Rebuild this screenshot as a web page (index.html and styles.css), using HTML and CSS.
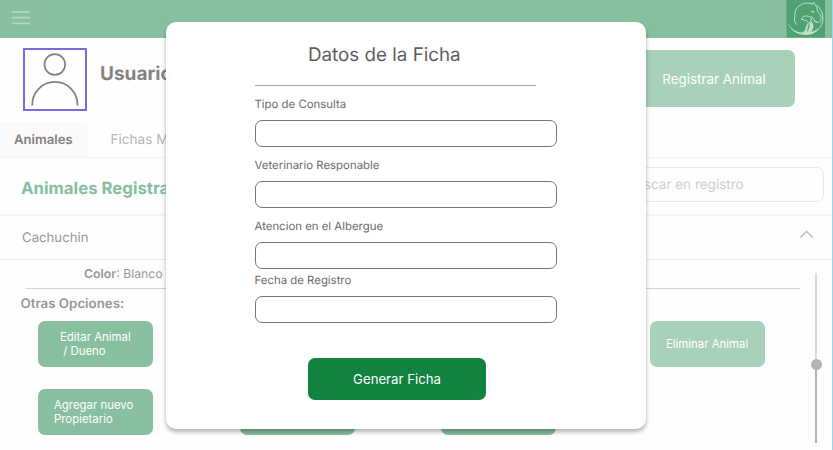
FILE: index.html
```html
<!DOCTYPE html>
<html lang="es">
<head>
<meta charset="utf-8">
<title>Registro de animales</title>
<link rel="stylesheet" href="styles.css">
</head>
<body>
<div class="screen">
  <header class="topbar">
    <svg class="menu" width="20" height="15" viewBox="0 0 20 15"><path d="M1 1.800h18M1 7.600h18M1 13.400h18" stroke="#b3d8c2" stroke-width="1.700"/></svg>
    <svg class="logo" width="39" height="38" viewBox="0 0 39 38">
      <path fill="#50a273" d="M.5 0H39v37.500H.5z"/>
      <g fill="none" stroke="#bfe0cc" stroke-width="1" stroke-linecap="round" stroke-linejoin="round">
        <path d="M26.500 4C19 1 10.500 5 9 12.500c-.5 2 0 4-.5 6s.5 4 2 6"/>
        <path d="M26.500 4l1-1.800 1.800 2.600c2 2 1 4.500 3.200 7.700 2 2.500 3.500 5 2 8-1 2.500-3.500 2.500-6 1"/>
        <path d="M31 5c6 6 8 14 3.500 22"/>
        <path d="M16 19.500c-1-3 2-3.500 5-3.500 2 0 2.500 1.500 5 1l2 3 3 2"/>
        <path d="M16 19.500l4.500 1 2 2-2 4-1 4M25 18c1 3-2 4-2 7"/>
        <path d="M26 11.500l1.500.3" stroke-width="1.600"/>
      </g>
      <path fill="#bfe0cc" d="M1.500 22.500C5 29 9.500 32 16 32.500l3-2 3-6 1.500 2 1.500-6c2 3 3 5 2 8l-1.500 3.500c3.500-1 6.500-3 8.500-5.500-2 5.500-7.500 8.500-13.500 8.500-9 0-16.500-4.500-19-12.500z"/>
      <path d="M23 25.500l-1.500 6" stroke="#50a273" stroke-width="1.200"/>
    </svg>
  </header>

  <section class="profile">
    <div class="avatar">
      <svg width="60" height="60" viewBox="0 0 60 60" fill="none" stroke="#808080" stroke-width="1.700"><circle cx="29.800" cy="14.500" r="10.300"/><path d="M7.300 55.500V54.500a22.600 22.600 0 0 1 45.200 0v1"/></svg>
    </div>
    <h1 class="username">Usuario</h1>
    <button class="register">Registrar Animal</button>
  </section>

  <nav class="tabs">
    <span class="tab tab-active">Animales</span>
    <span class="tab">Fichas M</span>
  </nav>

  <section class="list-head">
    <h2>Animales Registrados</h2>
    <div class="search">Buscar en registro</div>
  </section>

  <section class="animal-row">
    <span>Cachuchin</span>
    <svg width="15" height="9" viewBox="0 0 15 9"><path d="M1.200 7.700l6.300-6.200 6.300 6.200" fill="none" stroke="#c4c4c4" stroke-width="1.700"/></svg>
  </section>

  <section class="details">
    <div class="details-main">
      <p class="color"><b>Color</b>: Blanco</p>
      <h3>Otras Opciones:</h3>
      <div class="options">
        <button class="option edit">Editar Animal<br>&nbsp;/ Dueno</button>
        <button class="option remove">Eliminar Animal</button>
        <button class="option add">Agregar nuevo<br>Propietario</button>
        <div class="option second"></div>
        <div class="option third"></div>
      </div>
    </div>
    <div class="scroll"><i class="knob"></i></div>
  </section>
</div>

<form class="modal">
  <h2 class="modal-title">Datos de la Ficha</h2>
  <label class="field">Tipo de Consulta<input type="text"></label>
  <label class="field">Veterinario Responable<input type="text"></label>
  <label class="field">Atencion en el Albergue<input type="text"></label>
  <label class="field">Fecha de Registro<input type="text"></label>
  <button type="button" class="submit">Generar Ficha</button>
</form>
</body>
</html>
```
FILE: styles.css
```css
* { box-sizing: border-box; }
body {
  margin: 0;
  font-family: Inter, "Liberation Sans", sans-serif;
  background: #fefefe;
  text-rendering: geometricPrecision;
}
h1, h2, h3, p { margin: 0; }
button { border: 0; padding: 0; font-family: inherit; color: #fff; }

.screen {
  width: 833px;
  height: 450px;
  overflow: hidden;
  border-right: 1px solid #94daf3;
}
.topbar {
  height: 38px;
  background: #88bf9f;
  display: flex;
  justify-content: space-between;
  align-items: flex-start;
  padding: 0 7px 0 11px;
}
.menu { margin-top: 10px; }

.profile {
  height: 84px;
  display: flex;
  align-items: flex-start;
  padding: 10px 37px 0 23px;
}
.avatar { width: 64px; height: 63px; border: 2px solid #7c69e2; overflow: hidden; }
.avatar svg { display: block; }
.username {
  margin: 14px 0 0 13px;
  font-size: 19px;
  line-height: 24px;
  font-weight: 700;
  color: #838383;
}
.register {
  margin: 2px 0 0 auto;
  width: 162px;
  height: 57px;
  border-radius: 7px;
  background: #a7d1b8;
  font-size: 13.4px;
}

.tabs {
  height: 36px;
  display: flex;
  border-bottom: 1px solid #f2f2f2;
  font-size: 13.6px;
  line-height: 37px;
  color: #b5b5b5;
}
.tab { padding-left: 22.500px; white-space: nowrap; }
.tab-active {
  width: 88px;
  padding-left: 14px;
  background: #fafafa;
  border-radius: 0 6px 0 0;
  font-size: 13.1px;
  font-weight: 600;
  color: #808080;
}

.list-head {
  height: 58px;
  display: flex;
  justify-content: space-between;
  align-items: flex-start;
  padding: 9px 8px 0 21px;
  border-bottom: 2px solid #f4f4f4;
}
.list-head h2 { margin-top: 11px; font-size: 16.8px; line-height: 22px; font-weight: 700; color: #88bf9f; }
.search {
  width: 205px;
  height: 35px;
  padding-left: 7px;
  border: 1px solid #e8e8e8;
  border-radius: 7px;
  font-size: 13.5px;
  line-height: 34px;
  color: #cecece;
}

.animal-row {
  height: 44px;
  display: flex;
  justify-content: space-between;
  align-items: center;
  padding: 0 18px 0 22px;
  border-bottom: 1px solid #ededed;
  font-size: 13.2px;
  color: #999;
}
.animal-row span { padding-top: 1px; }
.animal-row svg { margin-top: -6px; }

.details { height: 190px; display: flex; justify-content: space-between; }
.details-main { width: 800px; }
.color {
  height: 29px;
  margin-left: 25px;
  padding-left: 59px;
  border-bottom: 1px solid #d4d4d4;
  font-size: 12.3px;
  line-height: 27px;
  color: #999;
}
.color b, .details h3 { font-weight: 600; color: #979797; }
.details h3 { margin-left: 20.5px; height: 30px; font-size: 13.3px; line-height: 31px; }
.options {
  display: grid;
  grid-template-columns: 115px 115px 115px 115px;
  grid-template-rows: 46px 46px;
  column-gap: 86.700px;
  row-gap: 22px;
  margin: 2px 0 0 38px;
}
.option {
  border-radius: 7px;
  background: #88bf9f;
  font-size: 11.4px;
  line-height: 14px;
  text-align: left;
  white-space: nowrap;
}
.edit { padding-left: 22px; }
.add { grid-column: 1; padding-left: 16px; }
.remove { grid-column: 4; margin: 0 -6.500px 0 6.500px; background: #a7d1b8; text-align: center; }

.scroll {
  width: 2px;
  height: 170px;
  margin: 13px 15px 0 0;
  background: linear-gradient(#dadada 91px, #b4b4b4 91px);
  display: flex;
  justify-content: center;
}
.knob { flex: none; width: 11px; height: 11px; margin-top: 86px; border-radius: 50%; background: #b4b4b4; }

.modal {
  position: absolute;
  left: 166px;
  top: 22px;
  width: 480px;
  height: 407px;
  padding: 0 89px 0 88.500px;
  border-radius: 10px;
  background: #fff;
  box-shadow: 0 3px 4px rgba(0, 0, 0, .3);
  display: flex;
  flex-direction: column;
}
.modal-title {
  width: 281px;
  height: 64px;
  margin-bottom: 11px;
  padding-left: 53.500px;
  border-bottom: 1px solid #a5a5a5;
  font-size: 18.8px;
  line-height: 65px;
  font-weight: 400;
  color: #5d5d5d;
  white-space: nowrap;
}
.field {
  height: 61px;
  font-size: 11.4px;
  line-height: 15px;
  color: #6a6a6a;
}
.field input {
  display: block;
  width: 302px;
  height: 27px;
  margin: 8px 0 0;
  border: 1px solid #777;
  border-radius: 7px;
  background: #fff;
}
.field:nth-of-type(3) { height: 54px; }
.submit {
  width: 178px;
  height: 42px;
  margin: 24px 0 0 53.500px;
  border-radius: 7px;
  background: #118240;
  font-size: 13.2px;
}
```
